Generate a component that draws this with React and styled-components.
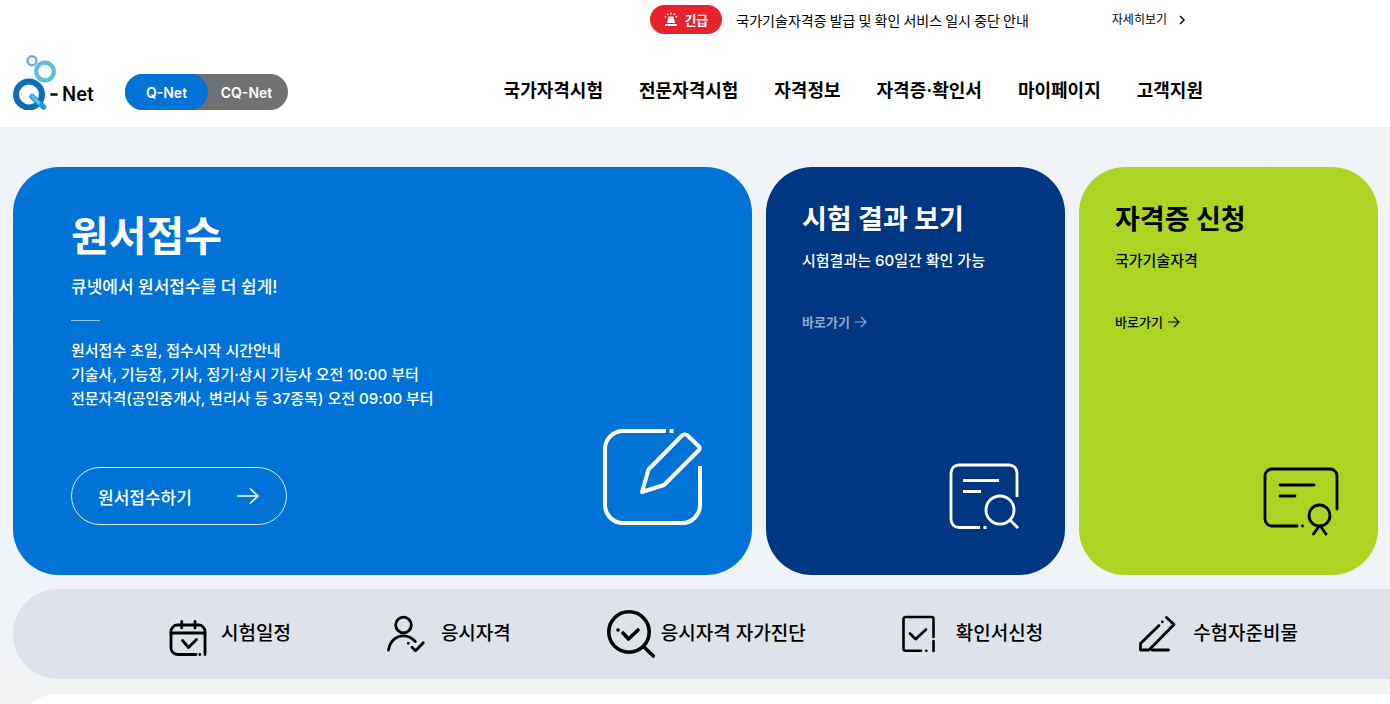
import React from 'react';
import styled, { createGlobalStyle } from 'styled-components';

const MENUS = ['국가자격시험', '전문자격시험', '자격정보', '자격증·확인서', '마이페이지', '고객지원'];

const QUICK_LINKS = [
  { label: '시험일정', icon: CalendarIcon },
  { label: '응시자격', icon: UserIcon },
  { label: '응시자격 자가진단', icon: DiagnosisIcon },
  { label: '확인서신청', icon: CertificateIcon },
  { label: '수험자준비물', icon: PencilIcon },
];

export default function App() {
  return (
    <Page>
      <GlobalStyle />
      <Notice>
        <Badge>
          <SirenIcon />
          긴급
        </Badge>
        <NoticeText href="#notice">국가기술자격증 발급 및 확인 서비스 일시 중단 안내</NoticeText>
        <NoticeMore href="#notice">
          자세히보기
          <svg width="8" height="10" viewBox="0 0 8 10" fill="none" stroke="#111" strokeWidth="1.6">
            <path d="M2 1l4 4-4 4" />
          </svg>
        </NoticeMore>
      </Notice>

      <Header>
        <Logo href="#home" aria-label="Q-Net">
          <LogoMark />
          <span>Net</span>
        </Logo>
        <Switch>
          <SwitchButton type="button" $active>
            Q-Net
          </SwitchButton>
          <SwitchButton type="button">CQ-Net</SwitchButton>
        </Switch>
        <Nav>
          {MENUS.map(menu => (
            <a key={menu} href="#menu">
              {menu}
            </a>
          ))}
        </Nav>
      </Header>

      <Main>
        <Cards>
          <ApplyCard>
            <div>
              <ApplyTitle>원서접수</ApplyTitle>
              <ApplyLead>큐넷에서 원서접수를 더 쉽게!</ApplyLead>
              <Divider />
              <ApplyInfo>
                원서접수 초일, 접수시작 시간안내
                <br />
                기술사, 기능장, 기사, 정기·상시 기능사 오전 10:00 부터
                <br />
                전문자격(공인중개사, 변리사 등 37종목) 오전 09:00 부터
              </ApplyInfo>
              <ApplyButton type="button">
                원서접수하기
                <svg width="24" height="18" viewBox="0 0 24 18" fill="none" stroke="#fff" strokeWidth="1.6">
                  <path d="M1 9h21M14 1.500l8 7.500-8 7.500" />
                </svg>
              </ApplyButton>
            </div>
            <WriteIcon />
          </ApplyCard>

          <SideCard $bg="#003782" $color="#fff" $inset="46px">
            <h2>시험 결과 보기</h2>
            <p>시험결과는 60일간 확인 가능</p>
            <GoLink href="#result" $color="#8fa9cb" $bold>
              바로가기
              <ArrowIcon />
            </GoLink>
            <ResultIcon />
          </SideCard>

          <SideCard $bg="#acd523" $color="#000" $inset="39px">
            <h2>자격증 신청</h2>
            <p>국가기술자격</p>
            <GoLink href="#license" $color="#000">
              바로가기
              <ArrowIcon />
            </GoLink>
            <LicenseIcon />
          </SideCard>
        </Cards>

        <QuickBar>
          {QUICK_LINKS.map(({ label, icon: Icon }) => (
            <QuickLink key={label} href="#quick">
              <Icon />
              {label}
            </QuickLink>
          ))}
        </QuickBar>

        <Board />
      </Main>
    </Page>
  );
}

function SirenIcon() {
  return (
    <svg width="14" height="15" viewBox="0 0 14 15" fill="#fff">
      <path d="M4.500 4.500h5l1.500 6.500H3z" />
      <path d="M1 12h12v2H1z" />
      <path d="M7 .5v2.300M3.300 1.500l.8 1.500M10.700 1.500l-.8 1.500M.8 4.200l1.600 1M13.200 4.200l-1.600 1" stroke="#fff" strokeWidth="1.300" />
    </svg>
  );
}

function LogoMark() {
  return (
    <svg width="46" height="57" viewBox="0 0 46 57" fill="none">
      <circle cx="19" cy="7.700" r="4.500" stroke="#72b2d8" strokeWidth="2.400" />
      <circle cx="32" cy="18.500" r="8.800" stroke="#62bcdb" strokeWidth="4.200" />
      <circle cx="16" cy="41.500" r="13" stroke="#0f6cb6" strokeWidth="6" />
      <path d="M19 43.500l11.500 10.500" stroke="#1b9ad8" strokeWidth="5.500" strokeLinecap="round" />
      <path d="M19 43l7 7" stroke="#5cc4ea" strokeWidth="3" strokeLinecap="round" />
      <path d="M37.500 41.500h7" stroke="#111" strokeWidth="2.600" />
    </svg>
  );
}

function ArrowIcon() {
  return (
    <svg width="12" height="12" viewBox="0 0 12 12" fill="none" stroke="currentColor" strokeWidth="1.200">
      <path d="M0 6h11M6 1l5 5-5 5" />
    </svg>
  );
}

function WriteIcon() {
  return (
    <svg width="100" height="96" viewBox="0 0 100 96" fill="none" stroke="#fff" strokeWidth="4" strokeLinejoin="round">
      <path d="M63 2H20A18 18 0 0 0 2 20V76a18 18 0 0 0 18 18H79a18 18 0 0 0 18-18V37" />
      <path d="M66.500 2h4" />
      <path d="M39 63l6.500-22.500L79 6.500a4 4 0 0 1 5.500 0L96 17.500a2.500 2.500 0 0 1 0 3.500L61 56z" />
    </svg>
  );
}

function ResultIcon() {
  return (
    <svg width="70" height="66" viewBox="0 0 70 66" fill="none" stroke="#fff" strokeWidth="2.800">
      <path d="M31 64.500H10A8 8 0 0 1 2 56.500V10A8 8 0 0 1 10 2H60A8 8 0 0 1 68 10V34" />
      <path d="M34.500 64.500h3M14 17.500H50M14 28.500H32" />
      <circle cx="51" cy="47" r="14" />
      <path d="M61 57l8 8" />
    </svg>
  );
}

function LicenseIcon() {
  return (
    <svg width="76" height="69" viewBox="0 0 76 69" fill="none" stroke="#000" strokeWidth="2.800" strokeLinecap="round">
      <path d="M34 59H9A7 7 0 0 1 2 52V9A7 7 0 0 1 9 2H67A7 7 0 0 1 74 9V42" />
      <path d="M39.500 59h.1M17 18H51M17 29H32" />
      <circle cx="56.500" cy="48.500" r="10.500" />
      <path d="M55.500 60l-5 7M58 60l5 7" />
    </svg>
  );
}

function CalendarIcon() {
  return (
    <QuickIcon strokeWidth="2.800">
      <path d="M29 44.500H10.500a6.500 6.500 0 0 1-6.500-6.500V21.500A6.500 6.500 0 0 1 10.500 15H31.500A6.500 6.500 0 0 1 38 21.500V44.500" />
      <path d="M4 23H38M14.700 11.500V18M28 11.500V18M32.700 44.500h.1" />
      <path d="M15.500 30.500l6 7 8-8" />
    </QuickIcon>
  );
}

function UserIcon() {
  return (
    <QuickIcon strokeWidth="2.800">
      <circle cx="16.500" cy="15" r="7.800" />
      <path d="M1.500 40C3 31 9 25.800 16.500 25.800c4.500 0 8.500 2 11.800 5.700" />
      <path d="M21.300 33.300h.1M25 37.200l3.600 3.600 7.700-8" />
    </QuickIcon>
  );
}

function DiagnosisIcon() {
  return (
    <QuickIcon strokeWidth="3.600">
      <circle cx="22" cy="22" r="20.200" />
      <path d="M37 37l9.300 9M16 23l5.500 6 9.500-9M11 20h.1" />
    </QuickIcon>
  );
}

function CertificateIcon() {
  return (
    <QuickIcon strokeWidth="2.600">
      <path d="M19 40.800H3.500a2 2 0 0 1-2-2V9a2 2 0 0 1 2-2H29.500a2 2 0 0 1 2 2V27M31.500 31V41" />
      <path d="M24.300 40.800h.1M8 23.500l5.500 5.700L24 19.500" />
    </QuickIcon>
  );
}

function PencilIcon() {
  return (
    <QuickIcon strokeWidth="2.800">
      <path d="M20 15.500L1.500 33.500V40H10L35 14.500 27.500 7.500" />
      <path d="M23.300 11.800h.1M13 40H29.500" />
    </QuickIcon>
  );
}

const GlobalStyle = createGlobalStyle`
  * {
    box-sizing: border-box;
  }

  body {
    margin: 0;
    color: #000;
    background: #fff;
    font-family: Inter, 'Noto Sans CJK KR', sans-serif;
  }

  h1, h2, p {
    margin: 0;
  }

  a {
    color: inherit;
    text-decoration: none;
    white-space: nowrap;
  }

  button {
    border: 0;
    padding: 0;
    color: inherit;
    background: none;
    font-family: inherit;
    cursor: pointer;
  }

  svg {
    flex-shrink: 0;
  }
`;

const Page = styled.div`
  display: flex;
  flex-direction: column;
  min-height: 100vh;
  overflow: hidden;
`;

const Notice = styled.div`
  display: flex;
  align-items: center;
  justify-content: flex-end;
  padding: 5px 204px 5px 13px;
`;

const Badge = styled.strong`
  display: flex;
  align-items: center;
  justify-content: center;
  gap: 6px;
  width: 72px;
  height: 29px;
  margin-right: 14px;
  border-radius: 15px;
  color: #fff;
  background: #e8222b;
  font-size: 13px;
  font-weight: 700;
`;

const NoticeText = styled.a`
  margin-right: 83px;
  font-family: 'Noto Sans CJK KR', sans-serif;
  font-size: 14px;
  line-height: 28px;
`;

const NoticeMore = styled.a`
  display: flex;
  align-items: center;
  gap: 11px;
  font-size: 12px;
  line-height: 28px;
`;

const Header = styled.header`
  display: flex;
  align-items: flex-end;
  padding: 14px 187px 17px 13px;
`;

const Logo = styled.a`
  display: flex;
  align-items: flex-end;
  gap: 3px;
  width: 112px;
  font-family: Roboto, sans-serif;
  font-size: 20px;
  font-weight: 500;
  line-height: 32px;
`;

const Switch = styled.div`
  display: flex;
  border-radius: 18px;
  background: #717171;
`;

const SwitchButton = styled.button`
  width: ${props => (props.$active ? '83px' : '80px')};
  height: 36px;
  padding-right: ${props => (props.$active ? '0' : '3px')};
  border-radius: 18px;
  color: #fff;
  background: ${props => (props.$active ? '#0074d6' : 'transparent')};
  font-size: 14px;
  font-weight: 600;
`;

const Nav = styled.nav`
  display: flex;
  gap: 36px;
  margin-left: auto;
  font-size: 18px;
  font-weight: 700;
  line-height: 38px;
`;

const Main = styled.main`
  display: flex;
  flex-direction: column;
  flex-grow: 1;
  padding: 40px 0 0 13px;
  background: linear-gradient(#eff3f7, #f0f3f7 70%, #f3f3f4);
`;

const Cards = styled.div`
  display: grid;
  grid-template-columns: 739fr 299fr 299fr;
  gap: 14px;
  margin-right: 12px;
`;

const ApplyCard = styled.section`
  display: flex;
  justify-content: space-between;
  padding: 41px 49px 50px 58px;
  border-radius: 46px;
  color: #fff;
  background: #0074d6;

  > svg {
    align-self: flex-end;
  }
`;

const ApplyTitle = styled.h1`
  font-size: 41px;
  font-weight: 700;
  line-height: 56px;
`;

const ApplyLead = styled.p`
  margin-top: 11px;
  font-size: 17px;
  font-weight: 500;
  line-height: 24px;
`;

const Divider = styled.div`
  width: 29px;
  height: 1px;
  margin: 21px 0 18px;
  background: #8fc6f2;
`;

const ApplyInfo = styled.p`
  font-size: 15px;
  font-weight: 500;
  line-height: 24px;
`;

const ApplyButton = styled.button`
  display: flex;
  align-items: center;
  justify-content: space-between;
  width: 216px;
  height: 58px;
  margin-top: 56px;
  padding: 0 26px;
  border: 1px solid #d6eafb;
  border-radius: 29px;
  font-size: 17px;
  font-weight: 500;
`;

const SideCard = styled.section`
  display: flex;
  flex-direction: column;
  align-items: flex-start;
  padding: 35px ${props => props.$inset} ${props => props.$inset} 36px;
  border-radius: 46px;
  color: ${props => props.$color};
  background: ${props => props.$bg};

  h2 {
    font-size: 27px;
    font-weight: 700;
    line-height: 36px;
    white-space: nowrap;
  }

  p {
    margin-top: 11px;
    font-size: 15px;
    font-weight: 500;
    line-height: 24px;
  }

  > svg {
    align-self: flex-end;
    margin-top: auto;
  }
`;

const GoLink = styled.a`
  display: flex;
  align-items: center;
  gap: 5px;
  margin-top: 39px;
  color: ${props => props.$color};
  font-size: 13px;
  font-weight: ${props => (props.$bold ? 700 : 500)};
  line-height: 20px;
`;

const QuickBar = styled.nav`
  display: flex;
  align-items: center;
  justify-content: center;
  gap: 96px;
  height: 90px;
  margin-top: 14px;
  padding-left: 62px;
  border-radius: 45px 0 0 45px;
  background: #dee2ea;
`;

const QuickLink = styled.a`
  display: flex;
  align-items: center;
  gap: 6px;
  font-size: 19px;
  font-weight: 500;
  line-height: 28px;
`;

const QuickIcon = styled.svg.attrs({ viewBox: '0 0 48 48' })`
  width: 48px;
  height: 48px;
  fill: none;
  stroke: #000;
  stroke-linecap: round;
  stroke-linejoin: round;
`;

const Board = styled.section`
  flex-grow: 1;
  min-height: 90px;
  margin-top: 15px;
  border-radius: 45px 0 0 0;
  background: #fff;
`;
